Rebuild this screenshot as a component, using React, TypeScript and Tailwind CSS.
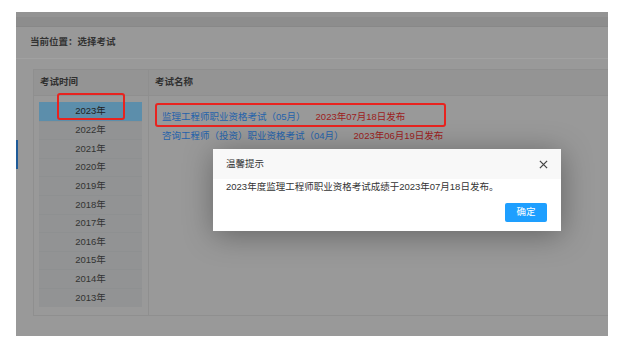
import React from "react";

const years = ["2023", "2022", "2021", "2020", "2019", "2018", "2017", "2016", "2015", "2014", "2013"];

const exams = [
  { name: "监理工程师职业资格考试（05月）", date: "2023年07月18日发布" },
  { name: "咨询工程师（投资）职业资格考试（04月）", date: "2023年06月19日发布" },
];

const App: React.FC = () => {
  return (
    <div className="w-[624px] h-[353px] bg-white pt-[12px] pl-[16px] font-['Liberation_Sans','Noto_Sans_CJK_SC',sans-serif] text-[9.5px] text-[#2b2b2b]">
      <div className="relative w-[592px] h-[324px] bg-[#999999] overflow-hidden">
        {/* top strip */}
        <div className="h-[15px] bg-[#8d8d8d] border-b border-[#888888]">
          <div className="h-[5px] bg-[#939393]" />
        </div>

        {/* breadcrumb */}
        <div className="h-[32px] flex items-center pl-[14px] border-b border-[#a1a1a1] font-semibold text-[#333]">
          当前位置：选择考试
        </div>

        {/* table */}
        <div className="mt-[10px] ml-[17px] h-[247px] border-l border-t border-b border-[#8f8f8f] flex flex-col">
          <div className="h-[26px] flex bg-[#949494] border-b border-[#8f8f8f] font-semibold text-[#303030]">
            <div className="w-[115px] border-r border-[#8f8f8f] flex items-center pl-[6px]">考试时间</div>
            <div className="flex-1 flex items-center pl-[6px]">考试名称</div>
          </div>
          <div className="flex flex-1">
            <div className="w-[115px] border-r border-[#8f8f8f] pt-[6px] pl-[5px]">
              <div className="w-[103px] bg-[#929394]">
                {years.map((y, i) => (
                  <div
                    key={y}
                    className={
                      i === 0
                        ? "h-[18.6px] flex items-center justify-center bg-[#5c8eab] text-[#222]"
                        : "h-[18.6px] flex items-center justify-center border-t border-[#8e9091] text-[#333]"
                    }
                  >
                    {y}年
                  </div>
                ))}
              </div>
            </div>
            <div className="flex-1 pt-[12px] pl-[13px] font-['Liberation_Sans','Noto_Sans_CJK_TC',sans-serif]">
              {exams.map((e) => (
                <div key={e.name} className="h-[19px] flex items-center whitespace-nowrap">
                  <span className="text-[#2462ab]">{e.name}</span>
                  <span className="ml-[10px] text-[#9c1c1c]">{e.date}</span>
                </div>
              ))}
            </div>
          </div>
        </div>

        {/* side tab marker */}
        <div className="absolute left-0 top-[128px] w-[2px] h-[29px] bg-[#1f5b98]" />

        {/* annotation boxes */}
        <div className="absolute left-[41px] top-[81px] w-[68px] h-[27px] border-2 border-[#e8231f] rounded-[3px]" />
        <div className="absolute left-[139px] top-[91px] w-[291px] h-[24px] border-2 border-[#e8231f] rounded-[3px]" />

        {/* dialog */}
        <div className="absolute left-[197px] top-[137px] w-[348px] h-[82px] bg-white shadow-[1px_4px_30px_rgba(0,0,0,0.35)] flex flex-col">
          <div className="h-[30px] bg-[#f8f8f8] flex items-center justify-between pl-[13px] pr-[13px] text-[#333]">
            <span>温馨提示</span>
            <svg width="9" height="9" viewBox="0 0 10 10" fill="none" stroke="#444" strokeWidth="1.4">
              <path d="M1 1L9 9M9 1L1 9" />
            </svg>
          </div>
          <div className="pl-[13px] leading-[14px] text-[#333] pt-[1px]">
            2023年度监理工程师职业资格考试成绩于2023年07月18日发布。
          </div>
          <div className="flex justify-end pr-[14px] mt-[9px]">
            <button className="w-[42px] h-[19px] bg-[#1e9fff] text-white rounded-[2px] text-[9.5px]">确定</button>
          </div>
        </div>
      </div>
    </div>
  );
};

export default App;
